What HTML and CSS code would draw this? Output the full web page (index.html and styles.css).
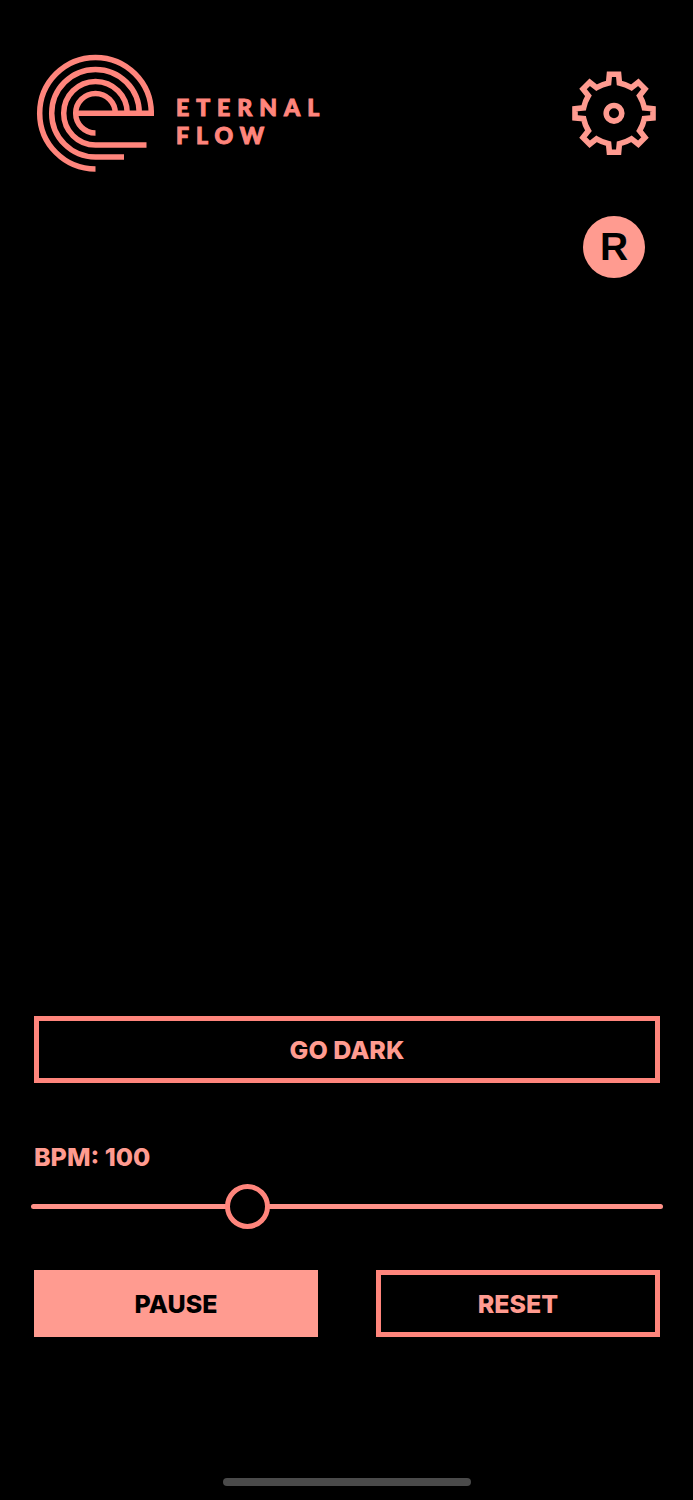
FILE: index.html
```html
<!DOCTYPE html>
<html lang="en">
<head>
    <meta charset="utf-8">
    <meta name="viewport" content="width=device-width, initial-scale=1">
    <title>Eternal Flow</title>
    <link rel="stylesheet" href="styles.css">
</head>
<body>
    <header class="header">
        <div class="brand">
            <svg class="brand-mark" viewBox="-59.5 -60.2 120 120" aria-hidden="true">
                <path d="M-20 0H58.5M55.8 0A55.8 55.8 0 1 0 0 55.8M43.8 0A43.8 43.8 0 1 0 0 43.8H28.5M31.8 0A31.8 31.8 0 1 0 0 31.8H51M19.8 0A19.8 19.8 0 1 0 0 19.8"/>
            </svg>
            <div class="brand-name">ETERNAL<br>FLOW</div>
        </div>
        <div class="actions">
            <button class="settings-btn" type="button" aria-label="Settings">
                <svg viewBox="-42 -42.3 84 84" aria-hidden="true">
                    <path d="M-4.6 -39H4.6L5.4 -30.4Q12 -29 17.5 -25.6L24.3 -31L31 -24.3L25.6 -17.5Q29 -12 30.4 -5.4L39 -4.6V4.6L30.4 5.4Q29 12 25.6 17.5L31 24.3L24.3 31L17.5 25.6Q12 29 5.4 30.4L4.6 39H-4.6L-5.4 30.4Q-12 29 -17.5 25.6L-24.3 31L-31 24.3L-25.6 17.5Q-29 12 -30.4 5.4L-39 4.6V-4.6L-30.4 -5.4Q-29 -12 -25.6 -17.5L-31 -24.3L-24.3 -31L-17.5 -25.6Q-12 -29 -5.4 -30.4Z"/>
                    <circle r="7.8"/>
                </svg>
            </button>
            <button class="record-btn" type="button">R</button>
        </div>
    </header>

    <main class="controls">
        <button class="btn" type="button">GO DARK</button>
        <div class="tempo">
            <label class="tempo-label" for="bpm">BPM: <span id="bpm-value">100</span></label>
            <input class="slider" type="range" id="bpm" min="1" max="300" value="100" oninput="updateBpm(this.value)">
        </div>
        <div class="btn-row">
            <button class="btn btn-filled" type="button">PAUSE</button>
            <button class="btn" type="button">RESET</button>
        </div>
    </main>

    <div class="home-indicator"></div>

    <script>
        function updateBpm(value) {
            document.getElementById('bpm-value').textContent = value;
        }
    </script>
</body>
</html>
```
FILE: styles.css
```css
* {
    box-sizing: border-box;
}
body {
    display: flex;
    flex-direction: column;
    min-height: 100vh;
    margin: 0;
    background-color: #000;
    color: #ff9b90;
    font-family: Inter, sans-serif;
}
button {
    padding: 0;
    border: none;
    background: none;
    color: inherit;
    font-family: inherit;
    cursor: pointer;
}
.header {
    display: flex;
    justify-content: space-between;
    align-items: flex-start;
    padding: 53px 37px 0 36px;
}
.brand {
    display: flex;
    gap: 20px;
    color: #ff857c;
}
.brand-mark {
    width: 120px;
    height: 120px;
    fill: none;
    stroke: currentColor;
    stroke-width: 5.5;
}
.brand-name {
    padding-top: 40px;
    font-family: Lato, sans-serif;
    font-size: 23px;
    font-weight: 900;
    line-height: 28px;
    letter-spacing: 7px;
    -webkit-text-stroke: 1px currentColor;
}
.actions {
    display: flex;
    flex-direction: column;
    align-items: center;
    gap: 61px;
    padding-top: 18px;
}
.settings-btn svg {
    display: block;
    width: 84px;
    height: 84px;
    fill: none;
    stroke: currentColor;
    stroke-width: 5.6;
    stroke-linejoin: miter;
}
.record-btn {
    width: 62px;
    height: 62px;
    border-radius: 50%;
    background-color: #ff9b90;
    color: #000;
    font-family: "Liberation Sans", Arial, sans-serif;
    font-size: 39px;
    font-weight: bold;
}
.controls {
    display: flex;
    flex-direction: column;
    margin-top: auto;
    padding: 0 33px 0 34px;
}
.btn {
    height: 67px;
    border: 5px solid #ff857c;
    font-size: 25px;
    font-weight: 800;
}
.btn-filled {
    border: none;
    background-color: #ff9b90;
    color: #000;
}
.tempo {
    display: flex;
    flex-direction: column;
    gap: 12px;
    padding: 59px 0 41px;
}
.tempo-label {
    font-size: 25px;
    font-weight: 800;
    line-height: 30px;
}
.slider {
    -webkit-appearance: none;
    appearance: none;
    height: 45px;
    margin: 0 -3px;
    background: none;
    cursor: pointer;
}
.slider::-webkit-slider-runnable-track {
    height: 5px;
    border-radius: 3px;
    background-color: #ff9188;
}
.slider::-webkit-slider-thumb {
    -webkit-appearance: none;
    width: 45px;
    height: 45px;
    margin-top: -20px;
    border: 5px solid #ff857c;
    border-radius: 50%;
    background-color: #000;
}
.btn-row {
    display: grid;
    grid-template-columns: 1fr 1fr;
    gap: 58px;
}
.home-indicator {
    align-self: center;
    width: 248px;
    height: 8px;
    margin: 141px 0 14px;
    border-radius: 4px;
    background-color: #4a4a4a;
}
```
